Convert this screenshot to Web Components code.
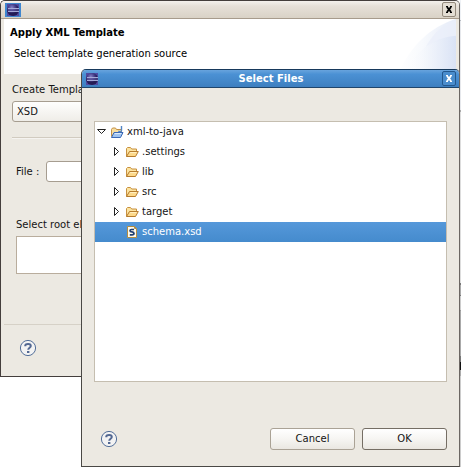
<!DOCTYPE html>
<html lang="en">
<head>
<meta charset="utf-8">
<title>Apply XML Template</title>
<style>
  body { margin: 0; background: #fff; font: 10px/16px "DejaVu Sans", sans-serif; color: #141414; }
</style>
</head>
<body>
<x-desktop>
  <x-window slot="back" caption="">
    <x-banner><span slot="title">Apply XML Template</span><span slot="text">Select template generation source</span></x-banner>
    <x-template-form></x-template-form>
  </x-window>
  <x-window slot="front" caption="Select Files" active>
    <x-file-picker>
      <x-tree-item kind="project" state="open" level="0">xml-to-java</x-tree-item>
      <x-tree-item kind="folder" state="closed">.settings</x-tree-item>
      <x-tree-item kind="folder" state="closed">lib</x-tree-item>
      <x-tree-item kind="folder" state="closed">src</x-tree-item>
      <x-tree-item kind="folder" state="closed">target</x-tree-item>
      <x-tree-item kind="schema" selected>schema.xsd</x-tree-item>
    </x-file-picker>
  </x-window>
</x-desktop>
<script>
const define = (name, html, setup) => customElements.define(name, class extends HTMLElement {
  connectedCallback() {
    if (this.shadowRoot) return;
    const root = this.attachShadow({ mode: 'open' });
    root.innerHTML = '<style>*{box-sizing:border-box}</style>' + html;
    if (setup) setup(this, root);
  }
});

define('x-desktop', `
<style>
  :host { display: grid; padding-right: 1px; align-items: start;
    background: linear-gradient(#eef1f5 0 20px, #b8bcc2 20px 21px, #e6e8ec 21px 110px, #aaa 110px 112px, #ddd 112px 283px,
      #777 283px 285px, #aaa 285px 295px, #777 295px 296px, #ccc 296px 310px, #999 310px 311px, #aaa 311px 356px,
      #777 356px 362px, #111 362px 370px, #aaa 370px 376px, #ccc 376px) right / 1px 100% no-repeat; }
  ::slotted(*) { grid-area: 1 / 1; min-width: 0; }
  ::slotted([slot=front]) { margin: 69px 0 0 81px; }
</style>
<slot name="back"></slot><slot name="front"></slot>`);

define('x-window', `
<style>
  :host { display: block; box-sizing: border-box; border: 1px solid #443e3c; border-right-color: #6c6763;
    border-radius: 5px 5px 0 0; background: #ece9e2; position: relative; overflow: hidden; }
  :host([active]) { border-color: #17395c #6c6763 #4a4845 #4a4845; }
  header { display: flex; align-items: center; height: 18px; padding: 0 3px 0 4px;
    background: linear-gradient(#f4f1ed, #e6e0d8 30%, #d9d2c6); border-bottom: 1px solid #a79b8c; }
  :host([active]) header { padding-left: 2px; background: linear-gradient(#68a4dd, #4b91d4 25%, #3d7fc0); border-bottom-color: #1f456b; color: #fff; }
  h1 { flex: 1; margin: 0; font-size: 10px; line-height: 16px; text-align: center; }
  .logo { display: block; }
  button { width: 14px; height: 15px; padding: 0; border: 1px solid #93897c; border-radius: 2px;
    background: #e3ddd3; color: #000; display: grid; place-items: center; }
  :host([active]) button { border-color: #24588d; background: #4a8dcd; color: #fff; }
  :host([active]) .frame { fill: none; }
  .body { padding: 0 3px; }
  :host([active]) .body { padding: 0; }
</style>
<header>
  <svg class="logo" width="16" height="14" viewBox="0 0 16 14" aria-hidden="true">
    <defs><radialGradient id="g" cx=".4" cy=".3"><stop offset="0" stop-color="#8580c8"/><stop offset=".55" stop-color="#4a438d"/><stop offset="1" stop-color="#241c56"/></radialGradient></defs>
    <rect class="frame" width="16" height="14" fill="#3f86cf"/><rect x="2" y="1" width="12" height="12" fill="#5149a0"/>
    <circle cx="8" cy="7" r="6" fill="url(#g)"/>
    <path d="M3 5.5h11M3 8.5h11" stroke="#a5a9d8"/><path d="M3 7h11" stroke="#605aa0"/>
  </svg>
  <h1></h1>
  <button aria-label="Close"><svg width="8" height="7" viewBox="0 0 8 7"><path d="M2 1l4 5M6 1l-4 5" stroke="currentColor" stroke-width="2"/><path d="M1 .5h2M5 .5h2M1 6.500h2M5 6.500h2" stroke="currentColor"/></svg></button>
</header>
<div class="body"><slot></slot></div>`, (el, root) => {
  root.querySelector('h1').textContent = el.getAttribute('caption');
});

define('x-banner', `
<style>
  :host { display: flex; position: relative; background: #fff; color: #000; }
  .copy { flex: 1; padding: 6px 0 12px 6px; }
  h2 { margin: 0; font-size: 10px; line-height: 16px; }
  p { margin: 5px 0 0 4px; line-height: 16px; }
  svg { width: 58px; height: 55px; }
</style>
<div class="copy"><h2><slot name="title"></slot></h2><p><slot name="text"></slot></p></div>
<svg viewBox="0 0 58 56" preserveAspectRatio="none" aria-hidden="true">
  <defs><linearGradient id="a"><stop offset="0" stop-color="#fff"/><stop offset=".4" stop-color="#f8fafd"/><stop offset="1" stop-color="#e6ecf8"/></linearGradient>
  <linearGradient id="b"><stop offset="0" stop-color="#fff" stop-opacity="0"/><stop offset="1" stop-color="#d9e2f5"/></linearGradient></defs>
  <path d="M0 56C12 28 32 8 58 0v56z" fill="url(#a)"/>
  <path d="M28 28C36 14 45 5 58 1v17Q42 19 28 28z" fill="#e9eefa" opacity=".7"/>
  <path d="M6 56C15 34 34 19 58 17v39z" fill="url(#b)"/>
</svg>`);

define('x-help', `
<style>
  :host { display: block; width: 16px; height: 16px; }
  button { display: block; width: 16px; height: 16px; padding: 0; border: 0; background: none; }
  svg { display: block; overflow: visible; }
</style>
<button aria-label="Help"><svg width="16" height="16" viewBox="0 0 16 16" fill="none">
  <circle cx="8" cy="8" r="7.600" fill="#f3f3f3" stroke="#536f9a"/>
  <path d="M5.300 6.200V5.300C5.700 3.600 10.800 3.200 10.800 5.900 10.800 7.700 8.200 7.800 8.200 9.800" stroke="#536892" stroke-width="2"/>
  <path d="M7 11h2.400v2H7z" fill="#536892"/>
</svg></button>`);

define('x-template-form', `
<style>
  :host { display: block; }
  form { display: flex; flex-direction: column; padding: 8px 9px 0 8px; }
  label { display: block; line-height: 16px; }
  select { appearance: none; display: block; height: 21px; margin-top: 3px; padding: 0 4px; font: inherit; color: inherit;
    border: 1px solid #a69d90; border-radius: 3px; background: linear-gradient(#fefefd, #efede8); }
  hr { width: 100%; height: 2px; margin: 15px 0 0; border: 0; border-top: 1px solid #d1cbc0; border-bottom: 1px solid #f5f3f0; }
  .file { display: flex; align-items: center; gap: 7px; margin: 22px 0 0 4px; }
  input { flex: 1; min-width: 0; height: 21px; border: 1px solid #a69d90; border-radius: 3px; background: #fff; font: inherit; }
  .root { margin: 35px 0 0 4px; }
  textarea { display: block; width: 100%; height: 38px; margin-top: 3px; padding: 2px; resize: none; border: 1px solid #b9ad9d; border-radius: 0; background: #fff; font: inherit; }
  footer { border-top: 1px solid #d6d1c7; margin-top: 50px; padding: 15px 0 20px 16px; }
</style>
<form>
  <label for="type">Create Template</label>
  <select id="type"><option>XSD</option></select>
  <hr>
  <div class="file"><label for="file">File :</label><input id="file" type="text"></div>
  <div class="root"><label for="root">Select root element</label><textarea id="root"></textarea></div>
</form>
<footer><x-help></x-help></footer>`);

define('x-tree-item', `
<style>
  :host { display: flex; align-items: center; height: 20px; padding-left: 17px; gap: 2px; color: #141414; }
  :host([level="0"]) { padding-left: 2px; }
  :host([selected]) { background: linear-gradient(#5598da, #458bcd); color: #fff; }
  svg { display: block; flex: none; }
</style>
<svg class="arrow" width="10" height="12" viewBox="0 0 10 12" fill="none"></svg>
<svg class="icon" width="16" height="16" viewBox="0 0 16 16" fill="none"></svg>
<span><slot></slot></span>`, (el, root) => {
  el.setAttribute('role', 'treeitem');
  const arrows = { open: 'M.5 3.500h8L4.500 7.500z', closed: 'M2.500 1.500v8L6.500 5.500z' };
  const state = el.getAttribute('state');
  if (state) root.querySelector('.arrow').innerHTML = `<path d="${arrows[state]}" stroke="#222" fill="#fff"/>`;
  const icons = {
    folder: `<path d="M2.500 12.500V4.500l1-1h3l1.200 1.500h4.800v3" fill="#fbe3a0" stroke="#c8913f"/>
      <path d="M2.500 12.500L5.500 7.500h8.800L11.500 12.500z" fill="#fdd98a" stroke="#b67c2e"/><path d="M6.200 8.600h6.300" stroke="#fff2c8"/>`,
    project: `<path d="M2.500 12.500V5.500l1-1.500h3l1 1.500h5v3" fill="#f8dea0" stroke="#c39045"/>
      <path d="M2.500 13.500L5 8.500h9L11.500 13.500z" fill="#9fc3ef" stroke="#3a68b5"/><path d="M5.800 9.600h6.500" stroke="#dfeeff"/>
      <path d="M12.500 2v4.500c0 1.500-2.500 1.500-3 .2" stroke="#5285c4" stroke-width="1.400"/>`,
    schema: `<path d="M3.500 2.500h7l2 2v9h-9z" fill="#fffbed" stroke="#b28d43"/><path d="M10.500 2.500v2h2" stroke="#b28d43"/>
      <path d="M10 5.500H7.500Q6 5.500 6 6.700 6 7.800 8 7.900 10 8.100 10 9.500 10 10.800 8 10.800H5.800" stroke="#203f72" stroke-width="1.700"/>`
  };
  root.querySelector('.icon').innerHTML = icons[el.getAttribute('kind')];
});

define('x-file-picker', `
<style>
  :host { display: block; padding: 33px 12px 16px; }
  .tree { min-height: 261px; border: 1px solid #c5beb0; background: #fff; }
  footer { display: flex; align-items: center; gap: 7px; margin-top: 46px; padding-left: 7px; }
  x-help { margin-right: auto; }
  button { width: 85px; height: 22px; padding: 0; border: 1px solid #aaa295; border-radius: 3px;
    background: linear-gradient(#fff, #f6f5f2 50%, #eae7e1); font: inherit; color: inherit; }
  button.default { border-color: #756e64; }
</style>
<div class="tree" role="tree" aria-label="Files"><slot></slot></div>
<footer><x-help></x-help><button>Cancel</button><button class="default">OK</button></footer>`);
</script>
</body>
</html>
